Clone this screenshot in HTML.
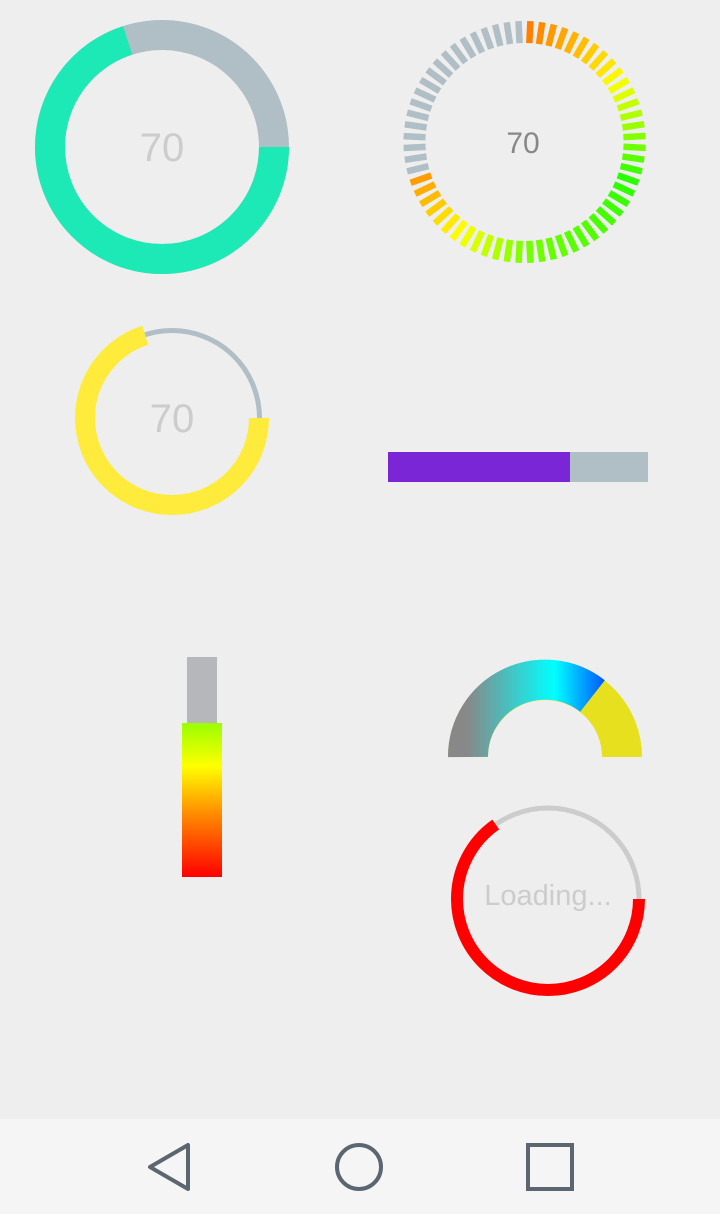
<!DOCTYPE html>
<html><head><meta charset="utf-8"><style>
html,body{margin:0;padding:0;background:#eeeeee;width:720px;height:1214px;overflow:hidden;font-family:"Liberation Sans",sans-serif}
svg{position:absolute;left:0;top:0}
.nav{position:absolute;left:0;top:1119px;width:720px;height:95px;background:#f5f5f5}
</style></head><body>
<svg width="720" height="1214" viewBox="0 0 720 1214">
<defs>
<linearGradient id="vg" x1="0" y1="723" x2="0" y2="877" gradientUnits="userSpaceOnUse">
<stop offset="0" stop-color="#99ff00"/><stop offset="0.28" stop-color="#ffff00"/><stop offset="0.6" stop-color="#ff8800"/><stop offset="1" stop-color="#ff0000"/>
</linearGradient>
<linearGradient id="ag" x1="448" y1="0" x2="642" y2="0" gradientUnits="userSpaceOnUse">
<stop offset="0" stop-color="#888888"/><stop offset="0.1" stop-color="#888888"/><stop offset="0.55" stop-color="#00ffff"/><stop offset="0.82" stop-color="#0050ff"/>
</linearGradient>
</defs>
<circle cx="162" cy="147" r="112" fill="none" stroke="#b0bec5" stroke-width="30"/>
<circle cx="162" cy="147" r="112" fill="none" stroke="#1de9b6" stroke-width="30" stroke-dasharray="492.6 1000"/>
<text x="162" y="161" font-size="40" fill="#cccccc" text-anchor="middle">70</text>
<g id="seg"></g>
<text x="523" y="153" font-size="30" fill="#888888" text-anchor="middle">70</text>
<circle cx="172" cy="418" r="87.5" fill="none" stroke="#b0bec5" stroke-width="5"/>
<circle cx="172" cy="418" r="87" fill="none" stroke="#ffeb3b" stroke-width="20" stroke-dasharray="382.6 1000"/>
<text x="172" y="432" font-size="40" fill="#cccccc" text-anchor="middle">70</text>
<rect x="388" y="452" width="260" height="30" fill="#b0bec5"/>
<rect x="388" y="452" width="182" height="30" fill="#7b26d6"/>
<rect x="187" y="657" width="30" height="66" fill="#b5b7bb"/>
<rect x="182" y="723" width="40" height="154" fill="url(#vg)"/>
<path d="M468 757 A77 77 0 0 1 622 757" fill="none" stroke="#e6e01e" stroke-width="40"/>
<path d="M468 757 A77 77 0 0 1 592.5 696" fill="none" stroke="url(#ag)" stroke-width="40"/>
<circle cx="548" cy="899" r="91" fill="none" stroke="#cccccc" stroke-width="5"/>
<circle cx="548" cy="899" r="91" fill="none" stroke="#ff0000" stroke-width="12" stroke-dasharray="373 1000"/>
<text x="548" y="905" font-size="29" fill="#cccccc" text-anchor="middle">Loading...</text>
</svg>
<div class="nav">
<svg width="720" height="95" viewBox="0 0 720 95">
<path d="M188 26 L188 70 L150 48 Z" fill="none" stroke="#5b6670" stroke-width="4" stroke-linejoin="round"/>
<circle cx="359" cy="48" r="22" fill="none" stroke="#5b6670" stroke-width="4"/>
<rect x="528" y="26" width="44" height="44" fill="none" stroke="#5b6670" stroke-width="4"/>
</svg>
</div>
<script>
(function(){
var g=document.getElementById('seg'),cx=524.5,cy=142,n=64,s='';
function hue(a){
 var pts=[[0,28],[50,55],[110,110],[180,92],[215,60],[252,36]];
 for(var i=0;i<pts.length-1;i++){if(a<=pts[i+1][0]){var t=(a-pts[i][0])/(pts[i+1][0]-pts[i][0]);return pts[i][1]+t*(pts[i+1][1]-pts[i][1]);}}
 return 36;}
for(var i=0;i<n;i++){
 var a=i*360/n+2.8, r=a*Math.PI/180, sn=Math.sin(r), cs=-Math.cos(r);
 var col=a<252?'hsl('+hue(a).toFixed(0)+',100%,50%)':'#b0bec5';
 s+='<line x1="'+(cx+99*sn).toFixed(1)+'" y1="'+(cy+99*cs).toFixed(1)+'" x2="'+(cx+121*sn).toFixed(1)+'" y2="'+(cy+121*cs).toFixed(1)+'" stroke="'+col+'" stroke-width="6.5"/>';
}
g.innerHTML=s;
})();
</script>
</body></html>
